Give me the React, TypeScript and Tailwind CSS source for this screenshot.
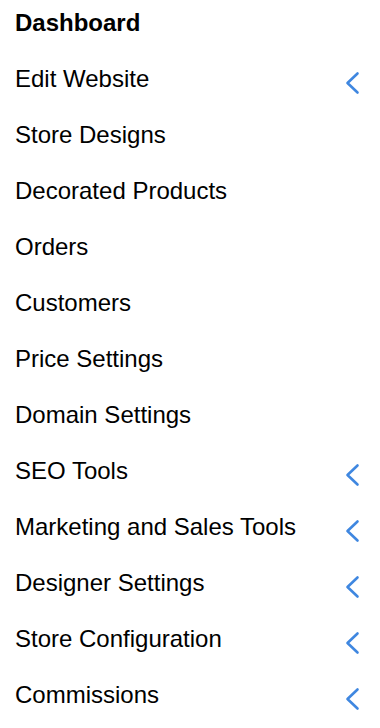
const items: { label: string; bold?: boolean; sub?: boolean }[] = [
  { label: "Dashboard", bold: true },
  { label: "Edit Website", sub: true },
  { label: "Store Designs" },
  { label: "Decorated Products" },
  { label: "Orders" },
  { label: "Customers" },
  { label: "Price Settings" },
  { label: "Domain Settings" },
  { label: "SEO Tools", sub: true },
  { label: "Marketing and Sales Tools", sub: true },
  { label: "Designer Settings", sub: true },
  { label: "Store Configuration", sub: true },
  { label: "Commissions", sub: true },
];

const Chevron = () => (
  <svg width="16" height="24" viewBox="0 0 16 24" fill="none" className="mt-[15px]">
    <path d="M13.5 2.5 L3.5 12 L13.5 21.5" stroke="#3f87e0" strokeWidth="2.6" strokeLinecap="round" strokeLinejoin="round" />
  </svg>
);

export default function App() {
  return (
    <div className="w-[380px] h-[728px] bg-white overflow-hidden font-['Liberation_Sans',Arial,sans-serif] text-black">
      <ul className="flex flex-col">
        {items.map((item) => (
          <li key={item.label} className="flex justify-between h-[56px] pl-[15px] pr-[20px]">
            <span className={`pt-[9px] leading-[28px] text-[24px] ${item.bold ? "font-bold" : ""}`}>{item.label}</span>
            {item.sub && <Chevron />}
          </li>
        ))}
      </ul>
    </div>
  );
}
